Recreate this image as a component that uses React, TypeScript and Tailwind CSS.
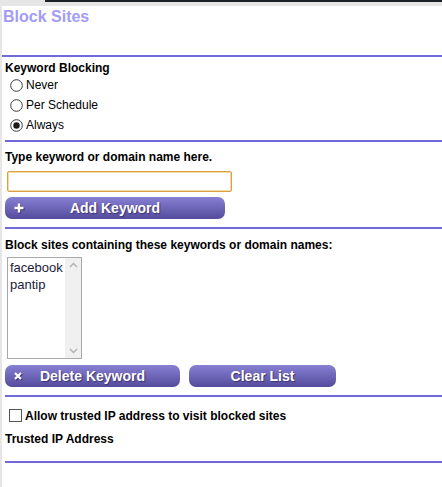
import React from "react";

const font = { fontFamily: '"Liberation Sans", Arial, sans-serif' };

function Radio({ checked }: { checked?: boolean }) {
  return (
    <svg width="13" height="13" viewBox="0 0 13 13" className="shrink-0">
      <circle cx="6.5" cy="6.5" r="5.8" fill="#fff" stroke="#3a3a3a" strokeWidth="1" />
      {checked && <circle cx="6.5" cy="6.5" r="3.2" fill="#1a1a1a" />}
    </svg>
  );
}

function Hr({ first }: { first?: boolean }) {
  return <div className={`h-[2px] bg-[#7168dc] ${first ? "ml-0" : "ml-[3px]"}`} />;
}

function PlusIcon() {
  return (
    <svg width="10" height="10" viewBox="0 0 10 10" className="[filter:drop-shadow(1px_1px_0.5px_#3b336f)]">
      <path d="M5 0.5 V9.5 M0.5 5 H9.5" stroke="#fff" strokeWidth="2.4" />
    </svg>
  );
}

function XIcon() {
  return (
    <svg width="8" height="8" viewBox="0 0 8 8" className="[filter:drop-shadow(1px_1px_0.5px_#3b336f)]">
      <path d="M1 1 L7 7 M7 1 L1 7" stroke="#fff" strokeWidth="2.2" />
    </svg>
  );
}

function PurpleButton({ icon, label, width }: { icon?: React.ReactNode; label: string; width: string }) {
  return (
    <button
      className={`${width} h-[22px] flex items-center rounded-[7px] bg-gradient-to-b from-[#8880d2] to-[#544b9c] text-white font-bold text-[14px] leading-none [text-shadow:1px_1px_1px_#3b336f]`}
      style={font}
    >
      {icon ? (
        <>
          <span className="w-[24px] pl-[9px] flex items-center">{icon}</span>
          <span className="flex-1 text-center pr-[24px]">{label}</span>
        </>
      ) : (
        <span className="flex-1 text-center">{label}</span>
      )}
    </button>
  );
}

export default function App() {
  return (
    <div className="w-[442px] h-[487px] bg-white flex flex-col overflow-hidden text-black" style={font}>
      <div className="h-[6px] bg-[#e6e6e6] flex">
        <div className="w-[45px]" />
        <div className="flex-1 h-[2px] bg-[#1d2327]" />
      </div>
      <div className="flex flex-1">
        <div className="w-[2px] bg-[#e6e6e6]" />
        <div className="flex-1 flex flex-col">
          <div className="h-[49px] pl-[1px] pt-[1px]">
            <div className="text-[16px] leading-[19px] font-bold text-[#a29cf8]">Block Sites</div>
          </div>
          <Hr first />
          <div className="h-[83px] pt-[4px] pl-[3px]">
            <div className="text-[12px] leading-[14px] font-bold">Keyword Blocking</div>
            {[
              ["Never", false],
              ["Per Schedule", false],
              ["Always", true],
            ].map(([l, c]) => (
              <div key={l as string} className="h-[20px] flex items-center pl-[5px] gap-[3px] text-[12px]">
                <Radio checked={c as boolean} />
                <span>{l as string}</span>
              </div>
            ))}
          </div>
          <Hr />
          <div className="h-[85px] pt-[8px] pl-[3px]">
            <div className="text-[12px] leading-[14px] font-bold">Type keyword or domain name here.</div>
            <div className="mt-[7px] ml-[2px] w-[225px] h-[21px] border border-[#dba243] rounded-[2px] shadow-[inset_0_0_0_1px_#f3d9a6]" />
            <div className="mt-[5px]">
              <PurpleButton icon={<PlusIcon />} label="Add Keyword" width="w-[220px]" />
            </div>
          </div>
          <Hr />
          <div className="h-[166px] pt-[9px] pl-[3px]">
            <div className="text-[12px] leading-[14px] font-bold">Block sites containing these keywords or domain names:</div>
            <div className="mt-[5px] ml-[2px] w-[75px] h-[102px] border border-[#a9a9a9] flex">
              <div className="flex-1 pl-[2px] pt-[1px] text-[13px] leading-[17px] text-[#1b1b3a]">
                <div>facebook</div>
                <div>pantip</div>
              </div>
              <div className="w-[16px] bg-[#f0f0f0] flex flex-col justify-between items-center py-[4px]">
                <svg width="9" height="6" viewBox="0 0 9 6">
                  <path d="M1 5 L4.5 1.5 L8 5" fill="none" stroke="#b4b4b4" strokeWidth="1.5" />
                </svg>
                <svg width="9" height="6" viewBox="0 0 9 6">
                  <path d="M1 1 L4.5 4.5 L8 1" fill="none" stroke="#b4b4b4" strokeWidth="1.5" />
                </svg>
              </div>
            </div>
            <div className="mt-[6px] flex gap-[9px]">
              <PurpleButton icon={<XIcon />} label="Delete Keyword" width="w-[175px]" />
              <PurpleButton label="Clear List" width="w-[147px]" />
            </div>
          </div>
          <Hr />
          <div className="h-[64px] pt-[10px] pl-[3px]">
            <div className="h-[17px] flex items-center gap-[3px] pl-[4px] text-[12px] font-bold">
              <div className="w-[13px] h-[13px] border border-[#555] bg-white shrink-0" />
              <span>Allow trusted IP address to visit blocked sites</span>
            </div>
            <div className="mt-[8px] text-[12px] leading-[14px] font-bold">Trusted IP Address</div>
          </div>
          <Hr />
        </div>
      </div>
    </div>
  );
}
